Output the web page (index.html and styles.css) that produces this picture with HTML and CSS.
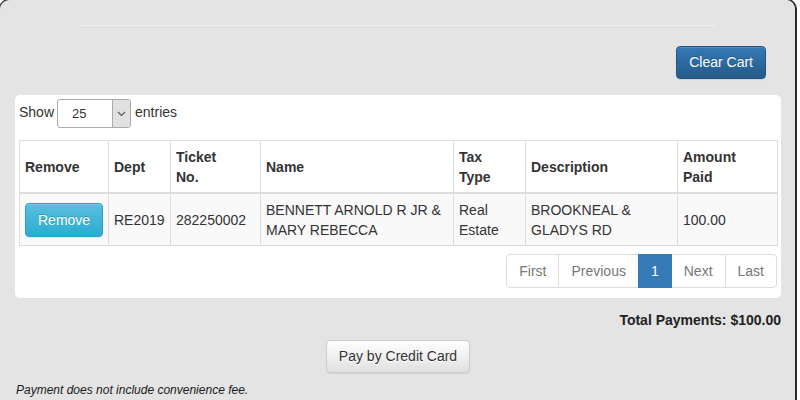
FILE: index.html
```html
<!DOCTYPE html>
<html>
<head>
<meta charset="utf-8">
<link rel="stylesheet" href="styles.css">
</head>
<body>
<div class="panel">
  <div class="rule"></div>
  <div class="actions">
    <button class="btn btn-primary">Clear Cart</button>
  </div>
  <div class="card">
    <div class="length">
      <span class="lbl">Show</span>
      <span class="select"><span class="select-val">25</span><span class="select-arrow"><svg width="9" height="6" viewBox="0 0 9 6"><path d="M1 1 L4.5 4.5 L8 1" fill="none" stroke="#555" stroke-width="1.1"/></svg></span></span>
      <span class="lbl">entries</span>
    </div>
    <table class="grid">
      <colgroup>
        <col class="c1"><col class="c2"><col class="c3"><col class="c4"><col class="c5"><col class="c6"><col class="c7">
      </colgroup>
      <thead>
        <tr>
          <th>Remove</th><th>Dept</th><th>Ticket<br>No.</th><th>Name</th><th>Tax<br>Type</th><th>Description</th><th>Amount<br>Paid</th>
        </tr>
      </thead>
      <tbody>
        <tr>
          <td><button class="btn btn-info">Remove</button></td>
          <td>RE2019</td>
          <td>282250002</td>
          <td>BENNETT ARNOLD R JR &amp; MARY REBECCA</td>
          <td>Real Estate</td>
          <td>BROOKNEAL &amp; GLADYS RD</td>
          <td>100.00</td>
        </tr>
      </tbody>
    </table>
    <div class="pager-row">
      <ul class="pager">
        <li>First</li><li>Previous</li><li class="active">1</li><li>Next</li><li>Last</li>
      </ul>
    </div>
  </div>
  <div class="total">Total Payments: $100.00</div>
  <div class="pay">
    <button class="btn btn-default">Pay by Credit Card</button>
  </div>
  <div class="note">Payment does not include convenience fee.</div>
</div>
</body>
</html>
```
FILE: styles.css
```css
html, body {
  margin: 0;
  padding: 0;
  background: #ffffff;
  overflow: hidden;
}
body {
  font-family: "Liberation Sans", Arial, sans-serif;
  font-size: 14px;
  line-height: 20px;
  color: #333333;
}
.panel {
  margin: -1px 0 0 -1px;
  width: 766px;
  height: 375px;
  padding: 25px 14px 0 15px;
  background: #e4e4e4;
  border: 1px solid #2a2a2a;
  border-right-width: 2px;
  border-bottom: 0;
  border-radius: 10px 10px 0 0;
}
.rule {
  height: 1px;
  margin: 0 65px;
  background: #f0f0f0;
}
.actions {
  display: flex;
  justify-content: flex-end;
  margin-top: 20px;
  padding-right: 15px;
}
.btn {
  font-family: "Liberation Sans", Arial, sans-serif;
  font-size: 14px;
  line-height: 19px;
  padding: 6px 12px;
  border: 1px solid transparent;
  border-radius: 4px;
  cursor: pointer;
  margin: 0;
}
.btn-primary {
  color: #ffffff;
  background: linear-gradient(to bottom, #337ab7 0%, #265a88 100%);
  border-color: #245580;
  text-shadow: 0 -1px 0 rgba(0,0,0,.2);
  box-shadow: inset 0 1px 0 rgba(255,255,255,.15), 0 1px 1px rgba(0,0,0,.075);
}
.btn-info {
  color: #ffffff;
  background: linear-gradient(to bottom, #5bc0de 0%, #2aabd2 100%);
  border-color: #28a4c9;
  text-shadow: 0 -1px 0 rgba(0,0,0,.2);
  box-shadow: inset 0 1px 0 rgba(255,255,255,.15), 0 1px 1px rgba(0,0,0,.075);
  line-height: 20px;
}
.btn-default {
  color: #333333;
  background: linear-gradient(to bottom, #ffffff 0%, #e0e0e0 100%);
  border-color: #cccccc;
  text-shadow: 0 1px 0 #fff;
  box-shadow: inset 0 1px 0 rgba(255,255,255,.15), 0 1px 1px rgba(0,0,0,.075);
}
.card {
  margin-top: 16px;
  background: #ffffff;
  border-radius: 5px;
  padding: 4px 4px 10px 4px;
}
.length {
  display: flex;
  align-items: center;
  gap: 4px;
  height: 29px;
}
.lbl {
  margin-top: -3px;
}
.select {
  display: inline-flex;
  width: 72px;
  height: 27px;
  border: 1px solid #aaaaaa;
  border-radius: 3px;
  background: #ffffff;
  overflow: hidden;
  margin-left: -1px;
}
.select-val {
  flex: 1;
  font-size: 13px;
  line-height: 27px;
  padding-left: 14px;
}
.select-arrow {
  width: 17px;
  border-left: 1px solid #aaaaaa;
  background: #e1e1e1;
  display: flex;
  align-items: center;
  justify-content: center;
}
.grid {
  margin-top: 12px;
  width: 758px;
  table-layout: fixed;
  border-collapse: collapse;
  border: 1px solid #dddddd;
}
.c1 { width: 89px; }
.c2 { width: 62px; }
.c3 { width: 90px; }
.c4 { width: 193px; }
.c5 { width: 72px; }
.c6 { width: 152px; }
.c7 { width: 100px; }
.grid th, .grid td {
  border: 1px solid #dddddd;
  padding: 5px 5px;
  text-align: left;
  vertical-align: middle;
  line-height: 20px;
}
.grid th {
  font-weight: bold;
  height: 41px;
  border-bottom-width: 2px;
  background: #ffffff;
}
.grid tbody tr {
  background: #f9f9f9;
}
.grid td {
  height: 41px;
}
.pager-row {
  display: flex;
  justify-content: flex-end;
  margin-top: 8px;
}
.pager {
  display: flex;
  list-style: none;
  margin: 0;
  padding: 0;
}
.pager li {
  padding: 6px 12px;
  line-height: 20px;
  border: 1px solid #dddddd;
  margin-left: -1px;
  color: #777777;
  background: #ffffff;
}
.pager li:first-child {
  border-radius: 4px 0 0 4px;
  margin-left: 0;
}
.pager li:last-child {
  border-radius: 0 4px 4px 0;
}
.pager li.active {
  background: #337ab7;
  border-color: #337ab7;
  color: #ffffff;
  position: relative;
  z-index: 1;
}
.total {
  margin-top: 12px;
  text-align: right;
  font-weight: bold;
  color: #222222;
}
.pay {
  margin-top: 10px;
  display: flex;
  justify-content: center;
}
.note {
  margin-top: 9px;
  padding-left: 1px;
  font-size: 12px;
  line-height: 17px;
  font-style: italic;
  color: #1a1a1a;
}
```
